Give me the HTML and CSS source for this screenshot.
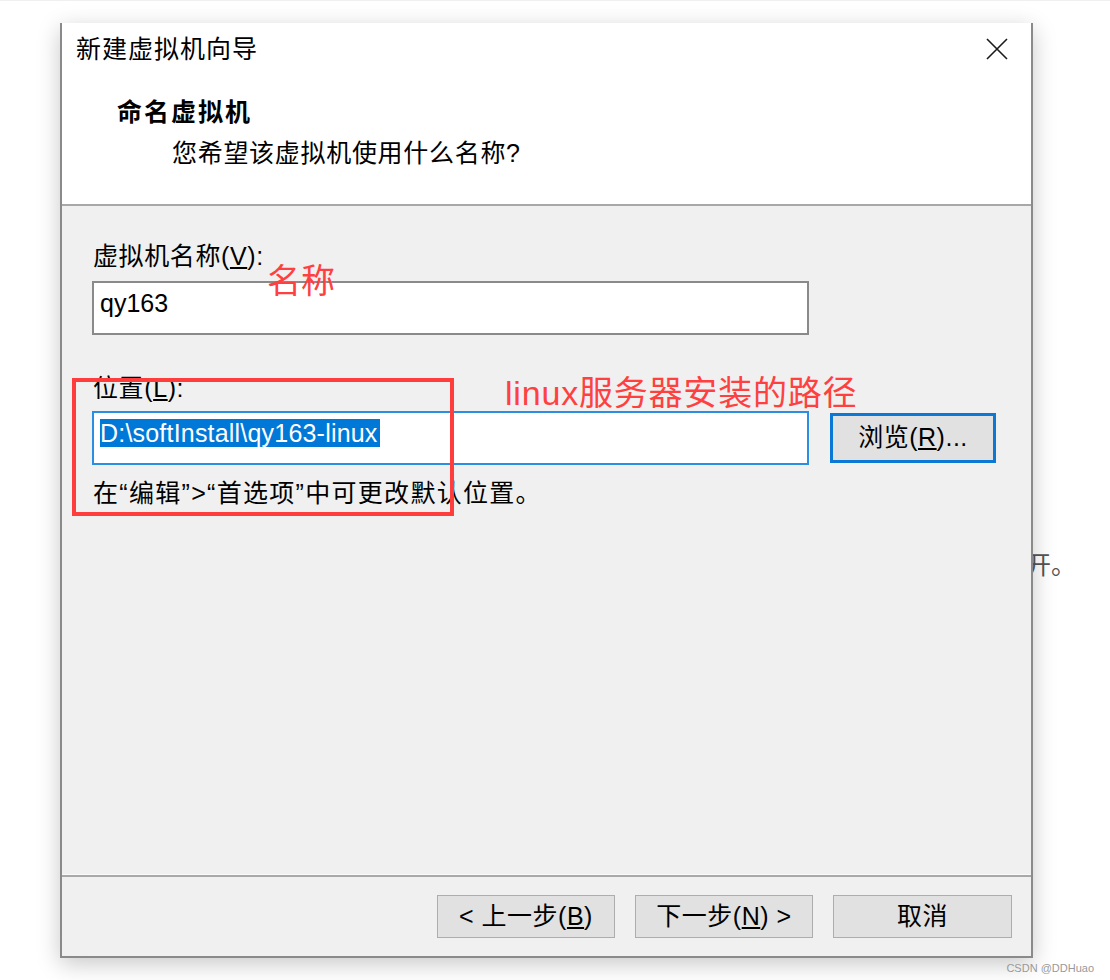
FILE: index.html
```html
<!DOCTYPE html>
<html lang="zh-CN">
<head>
<meta charset="utf-8">
<title>新建虚拟机向导</title>
<link rel="stylesheet" href="styles.css">
</head>
<body>
<div class="page">
  <span class="behind-text">开。</span>
  <div class="dialog">
    <div class="header">
      <div class="title-row">
        <span class="title">新建虚拟机向导</span>
        <svg class="close" width="22" height="22" viewBox="0 0 22 22"><path d="M1 1 L21 21 M21 1 L1 21" stroke="#1a1a1a" stroke-width="1.6" fill="none"/></svg>
      </div>
      <div class="heading">命名虚拟机</div>
      <div class="subheading">您希望该虚拟机使用什么名称?</div>
    </div>
    <div class="content">
      <div class="label">虚拟机名称(<u>V</u>):</div>
      <div class="input">qy163</div>
      <div class="label label-loc">位置(<u>L</u>):</div>
      <div class="loc-row">
        <div class="input input-focus"><span class="sel">D:\softInstall\qy163-linux</span></div>
        <div class="btn btn-browse">浏览(<u>R</u>)...</div>
      </div>
      <div class="hint">在“编辑”&gt;“首选项”中可更改默认位置。</div>
    </div>
    <div class="footer">
      <div class="btn">&lt; 上一步(<u>B</u>)</div>
      <div class="btn">下一步(<u>N</u>) &gt;</div>
      <div class="btn">取消</div>
    </div>
  </div>
  <span class="anno anno-name">名称</span>
  <span class="anno anno-path">linux服务器安装的路径</span>
  <div class="anno-box"></div>
  <span class="watermark">CSDN @DDHuao</span>
</div>
</body>
</html>
```
FILE: styles.css
```css
html, body {
  margin: 0;
  padding: 0;
  background: #ffffff;
}
body {
  font-family: "Liberation Sans", "Noto Sans CJK SC", sans-serif;
  color: #000;
  width: 1110px;
  height: 980px;
  overflow: hidden;
}
.page {
  position: relative;
  width: 1110px;
  height: 980px;
  border-top: 1px solid #f0f0f0;
  box-sizing: border-box;
  padding-top: 22px;
  padding-left: 60px;
}
.dialog {
  position: relative;
  z-index: 2;
  width: 973px;
  height: 935px;
  box-sizing: border-box;
  border-left: 2px solid #8a8a8a;
  border-right: 2px solid #8a8a8a;
  border-bottom: 2px solid #8a8a8a;
  background: #f0f0f0;
  display: flex;
  flex-direction: column;
  box-shadow: 0 6px 22px rgba(0, 0, 0, 0.22);
}
.header {
  height: 183px;
  background: #fff;
  border-bottom: 2px solid #a8a8a8;
  box-sizing: border-box;
  padding: 11px 23px 0 14px;
}
.title-row {
  display: flex;
  justify-content: space-between;
  align-items: center;
  height: 30px;
}
.title {
  font-size: 25px;
  line-height: 30px;
  letter-spacing: 1px;
}
.close {
  display: block;
}
.heading {
  margin-top: 33px;
  margin-left: 41px;
  font-size: 25px;
  font-weight: bold;
  line-height: 30px;
  letter-spacing: 2px;
}
.subheading {
  margin-top: 11px;
  margin-left: 96px;
  font-size: 25px;
  line-height: 30px;
  letter-spacing: 0.7px;
}
.content {
  flex: 1;
  padding: 35px 0 0 30px;
  border-bottom: 2px solid #a8a8a8;
  position: relative;
}
.content::after {
  content: "";
  position: absolute;
  left: 0;
  right: 0;
  bottom: 0;
  height: 1px;
  background: #fafafa;
}
.label {
  font-size: 25px;
  line-height: 30px;
  padding-left: 1px;
  margin-bottom: 10px;
  letter-spacing: 0.6px;
}
.label-loc {
  margin-top: 38px;
  margin-bottom: 8px;
}
.input {
  width: 717px;
  height: 54px;
  box-sizing: border-box;
  background: #fff;
  border: 2px solid #8a8a8a;
  font-size: 25px;
  line-height: 28px;
  padding: 6px 0 0 6px;
}
.input-focus {
  border: 2px solid #2b8ee0;
}
.sel {
  background: #0078d7;
  color: #fff;
  display: inline-block;
  line-height: 28px;
  padding-right: 2px;
  letter-spacing: 0.2px;
}
.loc-row {
  display: flex;
  align-items: center;
  gap: 21px;
}
.btn {
  width: 178px;
  height: 43px;
  box-sizing: border-box;
  background: #e1e1e1;
  border: 1px solid #adadad;
  font-size: 25px;
  line-height: 40px;
  text-align: center;
  letter-spacing: 0.5px;
}
.btn-browse {
  width: 166px;
  height: 50px;
  border: 3px solid #0a78d4;
  line-height: 43px;
}
.hint {
  margin-top: 13px;
  padding-left: 1px;
  font-size: 25px;
  line-height: 30px;
  letter-spacing: 1.3px;
}
.footer {
  height: 79px;
  box-sizing: border-box;
  display: flex;
  justify-content: flex-end;
  align-items: flex-start;
  gap: 20px;
  padding: 18px 19px 0 0;
}
.footer .btn:last-child {
  width: 179px;
}
.anno {
  position: absolute;
  z-index: 3;
  color: #ff4040;
  white-space: nowrap;
}
.anno-name {
  left: 267px;
  top: 260px;
  font-size: 34px;
  line-height: 40px;
}
.anno-path {
  left: 505px;
  top: 372px;
  font-size: 34px;
  line-height: 40px;
  letter-spacing: 0.8px;
}
.anno-box {
  position: absolute;
  z-index: 3;
  left: 72px;
  top: 377px;
  width: 382px;
  height: 138px;
  box-sizing: border-box;
  border: 4px solid #ff3d3d;
}
.behind-text {
  position: absolute;
  z-index: 1;
  left: 1026px;
  top: 549px;
  font-size: 25px;
  line-height: 30px;
  color: #555;
}
.watermark {
  position: absolute;
  z-index: 3;
  right: 16px;
  top: 959px;
  font-size: 11px;
  line-height: 16px;
  color: #999;
  font-family: "Liberation Sans", sans-serif;
}
```
